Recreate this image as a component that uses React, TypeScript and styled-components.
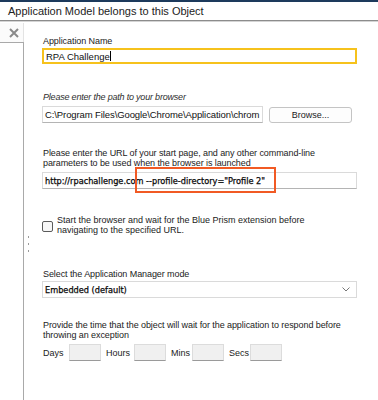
import React from "react";
import styled, { createGlobalStyle } from "styled-components";

const GlobalStyle = createGlobalStyle`
  html, body {
    margin: 0;
    padding: 0;
    background: #ffffff;
  }
  body {
    font-family: "Liberation Sans", Arial, sans-serif;
    color: #1b1b1b;
  }
`;

const Window = styled.div`
  width: 378px;
  height: 400px;
  display: flex;
  flex-direction: column;
  overflow: hidden;
  background: #ffffff;
  border-top: 2px solid #1d3a5c;
  box-sizing: border-box;
`;

const TitleBar = styled.div`
  height: 18px;
  display: flex;
  align-items: center;
  padding-left: 8px;
  font-size: 11px;
  color: #222;
  border-bottom: 1px solid #8c8c8c;
  box-shadow: 0 1px 0 #d4d4d4;
`;

const Body = styled.div`
  flex: 1;
  display: flex;
  margin-top: 2px;
`;

const Side = styled.div`
  width: 24px;
  display: flex;
  flex-direction: column;
`;

const CloseTab = styled.div`
  height: 19px;
  display: flex;
  align-items: center;
  justify-content: flex-end;
  padding-right: 4px;
  background: #fbfbfb;
  border-right: 1px solid #e3e3e3;
`;

const SidePanel = styled.div`
  flex: 1;
  border-top: 1px solid #a9a9a9;
  border-right: 1px solid #a9a9a9;
`;

const Splitter = styled.div`
  width: 18px;
  box-sizing: border-box;
  display: flex;
  flex-direction: column;
  align-items: flex-start;
  padding-left: 4px;
  padding-top: 213px;
  gap: 5px;
`;

const GripDot = styled.span`
  width: 1px;
  height: 2px;
  background: #9a9a9a;
`;

const Content = styled.div`
  flex: 1;
  display: flex;
  flex-direction: column;
  padding-top: 13px;
  padding-right: 21px;
`;

const Label = styled.div<{ $top?: number; $italic?: boolean; $below?: number }>`
  margin-top: ${({ $top }) => $top ?? 0}px;
  margin-bottom: ${({ $below }) => $below ?? 2}px;
  font-size: 9px;
  line-height: 10px;
  font-style: ${({ $italic }) => ($italic ? "italic" : "normal")};
  color: ${({ $italic }) => ($italic ? "#2e2e2e" : "#1b1b1b")};
  padding-left: 1px;
  letter-spacing: ${({ $italic }) => ($italic ? -0.2 : -0.08)}px;
  white-space: nowrap;
`;

const TextBox = styled.div<{ $focus?: boolean; $strong?: boolean }>`
  height: ${({ $focus }) => ($focus ? 16 : 17)}px;
  box-sizing: border-box;
  display: flex;
  align-items: center;
  padding-left: 2px;
  font-size: ${({ $strong }) => ($strong ? 8.2 : 9.5)}px;
  font-family: ${({ $strong }) =>
    $strong ? '"DejaVu Sans", Verdana, sans-serif' : '"Liberation Sans", Arial, sans-serif'};
  -webkit-text-stroke: ${({ $strong }) => ($strong ? "0.25px #000" : "0")};
  color: #111;
  background: #fff;
  white-space: nowrap;
  overflow: hidden;
  border: ${({ $focus }) => ($focus ? "2px solid #f6c21c" : "1px solid #dadada")};
  border-bottom-color: ${({ $focus }) => ($focus ? "#f6c21c" : "#b4b4b4")};
  flex: 1;
`;

const Caret = styled.span`
  display: inline-block;
  width: 1px;
  height: 10px;
  background: #000;
`;

const Row = styled.div`
  display: flex;
  align-items: center;
  gap: 6px;
`;

const PathBox = styled(TextBox)`
  flex: 0 0 221px;
  letter-spacing: -0.1px;
`;

const Button = styled.div`
  width: 83px;
  height: 16px;
  box-sizing: border-box;
  border: 1px solid #c4c4c4;
  border-radius: 3px;
  background: #fdfdfd;
  display: flex;
  align-items: center;
  justify-content: center;
  font-size: 9px;
  color: #222;
`;

const UrlWrap = styled.div`
  position: relative;
  display: flex;
  margin-top: 2px;
`;

const Highlight = styled.div`
  position: absolute;
  left: 93px;
  top: -5px;
  width: 141px;
  height: 26px;
  box-sizing: border-box;
  border: 2px solid #f15a24;
  pointer-events: none;
`;

const CheckRow = styled.div`
  margin-top: 26px;
  display: flex;
  align-items: flex-start;
  gap: 4px;
`;

const Check = styled.span`
  margin-top: 6px;
  width: 11px;
  height: 11px;
  box-sizing: border-box;
  border: 1px solid #5b5b5b;
  border-radius: 2px;
  background: #f7f7f7;
  flex: 0 0 auto;
`;

const CheckText = styled.div`
  font-size: 9px;
  line-height: 10px;
  color: #1b1b1b;
`;

const Select = styled(TextBox)`
  justify-content: space-between;
  padding-right: 6px;
  border-color: #dadada;
`;

const TimeRow = styled.div`
  display: flex;
  align-items: center;
  margin-top: 2px;
`;

const TimeLabel = styled.span<{ $w: number }>`
  width: ${({ $w }) => $w}px;
  font-size: 9px;
  padding-left: 1px;
  box-sizing: border-box;
  color: #1b1b1b;
`;

const TimeBox = styled.span`
  width: 32px;
  height: 17px;
  box-sizing: border-box;
  background: #f0f0f0;
  border: 1px solid #dcdcdc;
  border-bottom-color: #9a9a9a;
  margin-right: 4px;
`;

const App: React.FC = () => {
  return (
    <>
      <GlobalStyle />
      <Window>
        <TitleBar>Application Model belongs to this Object</TitleBar>
        <Body>
          <Side>
            <CloseTab>
              <svg width="10" height="10" viewBox="0 0 10 10">
                <path d="M1 1 L9 9 M9 1 L1 9" stroke="#8a8a8a" strokeWidth="2" />
              </svg>
            </CloseTab>
            <SidePanel />
          </Side>
          <Splitter>
            <GripDot />
            <GripDot />
            <GripDot />
          </Splitter>
          <Content>
            <Label>Application Name</Label>
            <Row>
              <TextBox $focus>
                RPA Challenge
                <Caret />
              </TextBox>
            </Row>

            <Label $top={28} $italic $below={4}>
              Please enter the path to your browser
            </Label>
            <Row>
              <PathBox>C:\Program Files\Google\Chrome\Application\chrom</PathBox>
              <Button>Browse...</Button>
            </Row>

            <Label $top={25}>
              Please enter the URL of your start page, and any other command-line
              <br />
              parameters to be used when the browser is launched
            </Label>
            <UrlWrap>
              <TextBox $strong>http://rpachallenge.com --profile-directory="Profile 2"</TextBox>
              <Highlight />
            </UrlWrap>

            <CheckRow>
              <Check />
              <CheckText>
                Start the browser and wait for the Blue Prism extension before
                <br />
                navigating to the specified URL.
              </CheckText>
            </CheckRow>

            <Label $top={34}>Select the Application Manager mode</Label>
            <Row>
              <Select $strong>
                <span>Embedded (default)</span>
                <svg width="8" height="5" viewBox="0 0 8 5">
                  <polyline points="0.5,0.5 4,4 7.5,0.5" fill="none" stroke="#777" strokeWidth="1" />
                </svg>
              </Select>
            </Row>

            <Label $top={22}>
              Provide the time that the object will wait for the application to respond before
              <br />
              throwing an exception
            </Label>
            <TimeRow>
              <TimeLabel $w={27}>Days</TimeLabel>
              <TimeBox />
              <TimeLabel $w={29}>Hours</TimeLabel>
              <TimeBox />
              <TimeLabel $w={22}>Mins</TimeLabel>
              <TimeBox />
              <TimeLabel $w={22}>Secs</TimeLabel>
              <TimeBox />
            </TimeRow>
          </Content>
        </Body>
      </Window>
    </>
  );
};

export default App;
